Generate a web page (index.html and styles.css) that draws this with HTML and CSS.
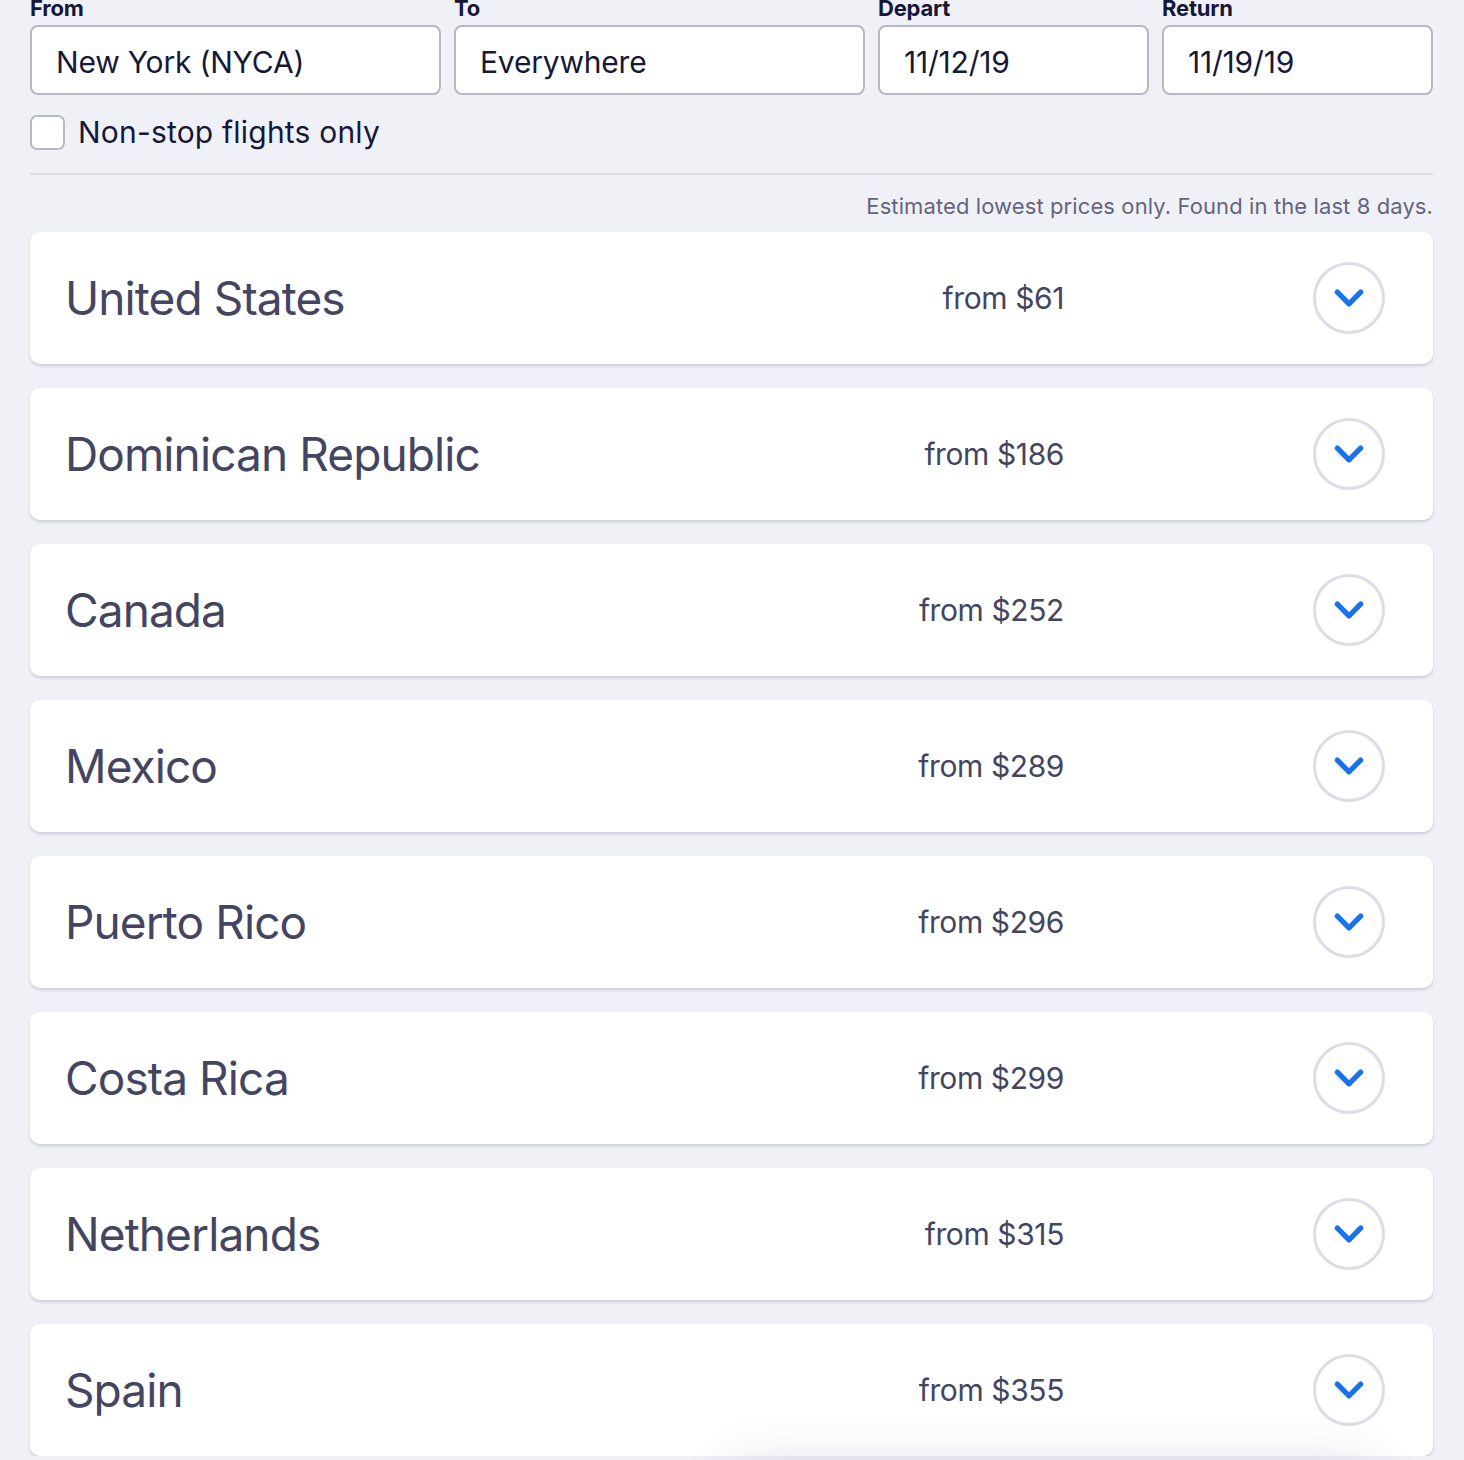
FILE: index.html
```html
<!DOCTYPE html>
<html>
  <head>
    <title>Explore everywhere</title>
    <link rel="stylesheet" href="styles.css">
  </head>
  <body>
    <div class="page">
      <form class="search">
        <div class="fields">
          <label class="field wide">
            <span class="label">From</span>
            <span class="input">New York (NYCA)</span>
          </label>
          <label class="field wide">
            <span class="label">To</span>
            <span class="input">Everywhere</span>
          </label>
          <label class="field">
            <span class="label">Depart</span>
            <span class="input">11/12/19</span>
          </label>
          <label class="field">
            <span class="label">Return</span>
            <span class="input">11/19/19</span>
          </label>
        </div>
        <label class="nonstop">
          <span class="box"></span>
          Non-stop flights only
        </label>
      </form>

      <p class="note">Estimated lowest prices only. Found in the last 8 days.</p>

      <ul class="results">
        <li class="result">
          <span class="country">United States</span>
          <span class="price">from $61</span>
          <button class="toggle"><svg viewBox="0 0 28 18" width="30" height="19"><path d="M3 3l11 11L25 3"/></svg></button>
        </li>
        <li class="result">
          <span class="country">Dominican Republic</span>
          <span class="price">from $186</span>
          <button class="toggle"><svg viewBox="0 0 28 18" width="30" height="19"><path d="M3 3l11 11L25 3"/></svg></button>
        </li>
        <li class="result">
          <span class="country">Canada</span>
          <span class="price">from $252</span>
          <button class="toggle"><svg viewBox="0 0 28 18" width="30" height="19"><path d="M3 3l11 11L25 3"/></svg></button>
        </li>
        <li class="result">
          <span class="country">Mexico</span>
          <span class="price">from $289</span>
          <button class="toggle"><svg viewBox="0 0 28 18" width="30" height="19"><path d="M3 3l11 11L25 3"/></svg></button>
        </li>
        <li class="result">
          <span class="country">Puerto Rico</span>
          <span class="price">from $296</span>
          <button class="toggle"><svg viewBox="0 0 28 18" width="30" height="19"><path d="M3 3l11 11L25 3"/></svg></button>
        </li>
        <li class="result">
          <span class="country">Costa Rica</span>
          <span class="price">from $299</span>
          <button class="toggle"><svg viewBox="0 0 28 18" width="30" height="19"><path d="M3 3l11 11L25 3"/></svg></button>
        </li>
        <li class="result">
          <span class="country">Netherlands</span>
          <span class="price">from $315</span>
          <button class="toggle"><svg viewBox="0 0 28 18" width="30" height="19"><path d="M3 3l11 11L25 3"/></svg></button>
        </li>
        <li class="result">
          <span class="country">Spain</span>
          <span class="price">from $355</span>
          <button class="toggle"><svg viewBox="0 0 28 18" width="30" height="19"><path d="M3 3l11 11L25 3"/></svg></button>
        </li>
      </ul>
    </div>
    <div class="floater"></div>
  </body>
</html>
```

FILE: styles.css
```css
html, body {
  margin: 0;
  background: rgb(240, 241, 247);
  font-family: Inter, "Noto Sans", sans-serif;
  color: rgb(22, 24, 56);
  overflow: hidden;
}
.page {
  padding: 0 31px 0 30px;
  margin-top: -5px;
}
.fields {
  display: grid;
  grid-template-columns: 411px 411px 271px 271px;
  gap: 13px;
}
.field {
  display: flex;
  flex-direction: column;
}
.label {
  font-size: 22px;
  line-height: 26px;
  font-weight: 700;
  margin-bottom: 4px;
  letter-spacing: -0.2px;
}
.input {
  height: 70px;
  box-sizing: border-box;
  border: 2px solid rgb(184, 184, 196);
  border-radius: 8px;
  background: #fff;
  padding: 3px 24px 0;
  display: flex;
  align-items: center;
  font-size: 30px;
  letter-spacing: -0.2px;
}
.nonstop {
  display: flex;
  align-items: center;
  gap: 13px;
  margin-top: 19px;
  font-size: 30px;
  letter-spacing: 0.2px;
}
.box {
  width: 35px;
  height: 35px;
  box-sizing: border-box;
  border: 2px solid rgb(184, 184, 196);
  border-radius: 7px;
  background: #fff;
}
.search {
  padding-bottom: 23px;
  border-bottom: 2px solid rgb(220, 221, 230);
}
.note {
  margin: 18px 0 13px;
  text-align: right;
  font-size: 22px;
  line-height: 26px;
  color: rgb(100, 101, 125);
  letter-spacing: 0.1px;
}
.results {
  list-style: none;
  margin: 0;
  padding: 0;
  display: flex;
  flex-direction: column;
  gap: 24px;
}
.result {
  height: 132px;
  background: #fff;
  border-radius: 10px;
  box-shadow: 0 2px 3px rgba(40, 40, 80, 0.18);
  display: grid;
  grid-template-columns: 1fr 300px 321px;
  align-items: center;
  padding: 0 48px 0 35px;
  color: rgb(68, 69, 96);
}
.country {
  font-size: 46px;
  letter-spacing: -0.9px;
}
.price {
  font-size: 30px;
  text-align: right;
  letter-spacing: -0.4px;
}
.toggle {
  justify-self: end;
  width: 72px;
  height: 72px;
  border-radius: 50%;
  border: 3px solid rgb(221, 221, 229);
  background: #fff;
  display: flex;
  align-items: center;
  justify-content: center;
  padding: 0;
}
.toggle path {
  fill: none;
  stroke: rgb(26, 115, 232);
  stroke-width: 5;
  stroke-linecap: round;
  stroke-linejoin: round;
}
.floater {
  position: fixed;
  left: 720px;
  right: 80px;
  top: 1470px;
  height: 80px;
  border-radius: 40px;
  background: #fff;
  box-shadow: 0 -10px 50px rgba(40, 40, 80, 0.12);
}
```
